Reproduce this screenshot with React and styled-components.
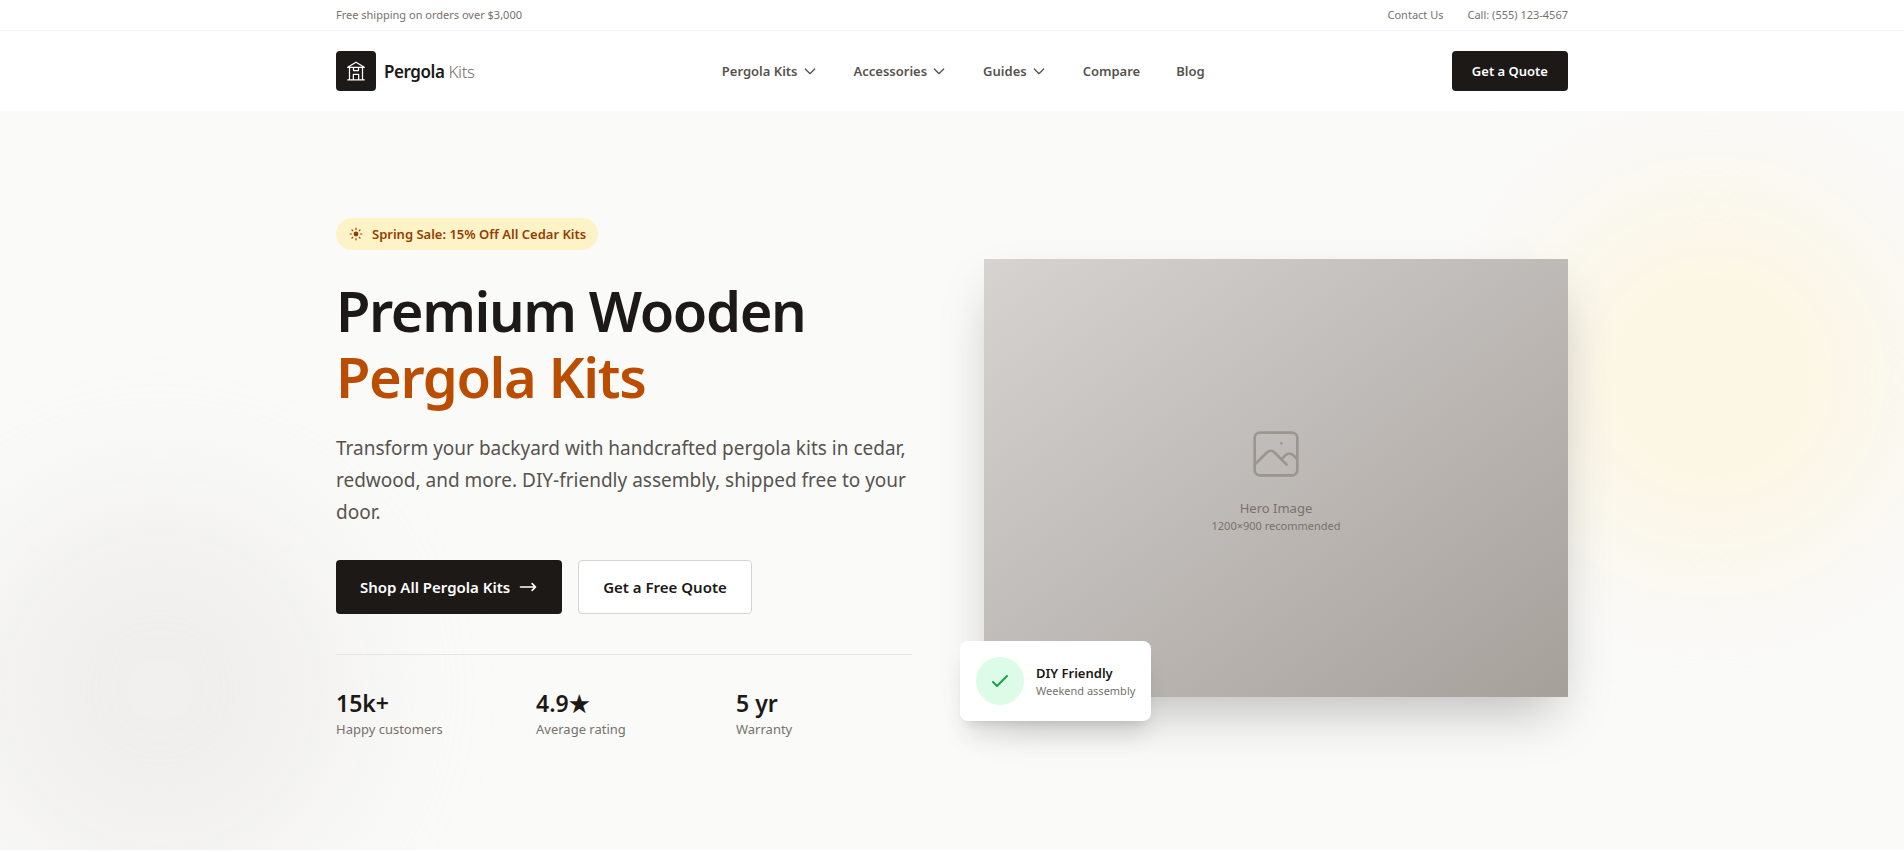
import React from 'react';
import styled, { createGlobalStyle } from 'styled-components';

const navItems = [
  { label: 'Pergola Kits', menu: true },
  { label: 'Accessories', menu: true },
  { label: 'Guides', menu: true },
  { label: 'Compare' },
  { label: 'Blog' },
];

const stats = [
  { value: '15k+', label: 'Happy customers' },
  { value: '4.9★', label: 'Average rating' },
  { value: '5 yr', label: 'Warranty' },
];

const LogoIcon = () => (
  <svg width="20" height="20" viewBox="0 0 24 24" fill="none" stroke="currentColor" strokeWidth="1.5" strokeLinecap="round" strokeLinejoin="round">
    <path d="M2 7.5 12 1.5l10 6M2 7.5h20M4.2 7.5v15M19.8 7.5v15M9 7.5v4M15 7.5v4M9 11.5h6M8.8 22.5V16h6.4v6.5M2 22.5h20" />
  </svg>
);

const ChevronIcon = () => (
  <svg width="16" height="16" viewBox="0 0 24 24" fill="none" stroke="currentColor" strokeWidth="2" strokeLinecap="round" strokeLinejoin="round">
    <path d="M19 9l-7 7-7-7" />
  </svg>
);

const SunIcon = () => (
  <svg width="16" height="16" viewBox="0 0 20 20" fill="none" stroke="currentColor" strokeWidth="1.5" strokeLinecap="round">
    <circle cx="10" cy="10" r="3" fill="currentColor" stroke="none" />
    <path d="M10 2.75v1.5M10 15.75v1.5M2.75 10h1.5M15.75 10h1.5M4.9 4.9l1 1M14.1 14.1l1 1M4.9 15.1l1-1M14.1 5.9l1-1" />
  </svg>
);

const ArrowIcon = () => (
  <svg width="20" height="20" viewBox="0 0 24 24" fill="none" stroke="currentColor" strokeWidth="2" strokeLinecap="round" strokeLinejoin="round">
    <path d="M17 8l4 4m0 0l-4 4m4-4H3" />
  </svg>
);

const ImageIcon = () => (
  <svg width="64" height="64" viewBox="0 0 24 24" fill="none" stroke="currentColor" strokeWidth="1" strokeLinecap="round" strokeLinejoin="round">
    <path d="M4 16l4.586-4.586a2 2 0 012.828 0L16 16m-2-2l1.586-1.586a2 2 0 012.828 0L20 14m-6-6h.01M6 20h12a2 2 0 002-2V6a2 2 0 00-2-2H6a2 2 0 00-2 2v12a2 2 0 002 2z" />
  </svg>
);

const CheckIcon = () => (
  <svg width="24" height="24" viewBox="0 0 24 24" fill="none" stroke="currentColor" strokeWidth="2" strokeLinecap="round" strokeLinejoin="round">
    <path d="M5 13l4 4L19 7" />
  </svg>
);

const App = () => {
  return (
    <>
      <GlobalStyle />
      <TopBar>
        <TopBarInner>
          <span>Free shipping on orders over $3,000</span>
          <TopLinks>
            <a href="#contact">Contact Us</a>
            <a href="tel:5551234567">Call: (555) 123-4567</a>
          </TopLinks>
        </TopBarInner>
      </TopBar>
      <Header>
        <HeaderInner>
          <Brand href="#home">
            <LogoBox><LogoIcon /></LogoBox>
            <BrandName>Pergola <span>Kits</span></BrandName>
          </Brand>
          <Nav>
            {navItems.map((item) =>
              item.menu ? (
                <NavButton key={item.label} type="button">
                  {item.label}
                  <ChevronIcon />
                </NavButton>
              ) : (
                <NavLink key={item.label} href={`#${item.label.toLowerCase()}`}>{item.label}</NavLink>
              )
            )}
          </Nav>
          <QuoteButton type="button">Get a Quote</QuoteButton>
        </HeaderInner>
      </Header>
      <Hero>
        <AmberGlow />
        <StoneGlow />
        <HeroInner>
          <HeroText>
            <SaleBadge><SunIcon />Spring Sale: 15% Off All Cedar Kits</SaleBadge>
            <Title>Premium Wooden <span>Pergola Kits</span></Title>
            <Lead>
              Transform your backyard with handcrafted pergola kits in cedar, redwood, and more. DIY-friendly assembly, shipped free to your door.
            </Lead>
            <Actions>
              <ActionLink href="#shop" $dark>Shop All Pergola Kits<ArrowIcon /></ActionLink>
              <ActionLink href="#quote">Get a Free Quote</ActionLink>
            </Actions>
            <Stats>
              {stats.map((stat) => (
                <div key={stat.label}>
                  <StatValue>{stat.value}</StatValue>
                  <StatLabel>{stat.label}</StatLabel>
                </div>
              ))}
            </Stats>
          </HeroText>
          <HeroMedia>
            <Placeholder>
              <ImageIcon />
              <PlaceholderTitle>Hero Image</PlaceholderTitle>
              <PlaceholderHint>1200×900 recommended</PlaceholderHint>
            </Placeholder>
            <FloatCard>
              <CheckCircle><CheckIcon /></CheckCircle>
              <div>
                <FloatTitle>DIY Friendly</FloatTitle>
                <FloatText>Weekend assembly</FloatText>
              </div>
            </FloatCard>
          </HeroMedia>
        </HeroInner>
      </Hero>
    </>
  );
};

const GlobalStyle = createGlobalStyle`
  * {
    box-sizing: border-box;
  }
  body {
    margin: 0;
    background: #ffffff;
    color: #1c1917;
    font-family: 'Segoe UI', 'Noto Sans', 'Open Sans', sans-serif;
    font-size: 13px;
  }
  a {
    color: inherit;
    text-decoration: none;
  }
  button {
    font: inherit;
    border: none;
    cursor: pointer;
  }
  svg {
    display: block;
    flex-shrink: 0;
  }
`;

const Container = styled.div`
  max-width: 1280px;
  margin: 0 auto;
  padding: 0 24px;
`;

const TopBar = styled.div`
  border-bottom: 1px solid #f5f5f4;
  color: #78716c;
  font-size: 11px;
  line-height: 14px;
`;

const TopBarInner = styled(Container)`
  display: flex;
  justify-content: space-between;
  padding: 8px 24px;
`;

const TopLinks = styled.div`
  display: flex;
  gap: 24px;
`;

const Header = styled.header`
  background: #ffffff;
`;

const HeaderInner = styled(Container)`
  display: flex;
  align-items: center;
  justify-content: space-between;
  height: 80px;
`;

const Brand = styled.a`
  display: flex;
  align-items: center;
  gap: 8px;
`;

const LogoBox = styled.div`
  display: flex;
  align-items: center;
  justify-content: center;
  width: 40px;
  height: 40px;
  border-radius: 4px;
  background: #1c1917;
  color: #ffffff;
`;

const BrandName = styled.span`
  font-size: 17px;
  font-weight: 600;
  letter-spacing: -0.025em;

  span {
    font-weight: 300;
    color: #78716c;
  }
`;

const Nav = styled.nav`
  display: flex;
  align-items: center;
  gap: 36px;
  color: #57534e;
  font-weight: 600;
`;

const NavButton = styled.button`
  display: flex;
  align-items: center;
  gap: 4px;
  padding: 0;
  background: none;
  color: inherit;
`;

const NavLink = styled.a`
  color: inherit;
`;

const QuoteButton = styled.button`
  height: 40px;
  padding: 0 20px;
  border-radius: 4px;
  background: #1c1917;
  color: #ffffff;
  font-weight: 600;
`;

const Hero = styled.section`
  position: relative;
  overflow: hidden;
  background: #fafaf9;
`;

const Glow = styled.div`
  position: absolute;
  width: 384px;
  height: 384px;
  border-radius: 50%;
  filter: blur(64px);
`;

const AmberGlow = styled(Glow)`
  top: 74px;
  right: 0;
  background: rgba(254, 243, 214, 0.6);
`;

const StoneGlow = styled(Glow)`
  bottom: -32px;
  left: -32px;
  background: rgba(231, 229, 228, 0.5);
`;

const HeroInner = styled(Container)`
  position: relative;
  display: grid;
  grid-template-columns: 1fr 1fr;
  align-items: center;
  gap: 64px;
  padding: 107px 24px 112px;
`;

const HeroText = styled.div`
  max-width: 576px;
`;

const SaleBadge = styled.div`
  display: inline-flex;
  align-items: center;
  gap: 8px;
  height: 32px;
  padding: 0 12px;
  border-radius: 16px;
  background: #fef3c6;
  color: #973c00;
  font-weight: 600;
  vertical-align: top;
`;

const Title = styled.h1`
  margin: 27px 0 23px;
  font-size: 56px;
  font-weight: 600;
  line-height: 66px;
  letter-spacing: -0.025em;

  span {
    display: block;
    color: #bb4d00;
  }
`;

const Lead = styled.p`
  margin: 0 0 32px;
  color: #57534e;
  font-size: 19px;
  line-height: 32px;
`;

const Actions = styled.div`
  display: flex;
  gap: 16px;
`;

const ActionLink = styled.a`
  display: flex;
  align-items: center;
  gap: 8px;
  height: 54px;
  padding: 0 24px;
  border: ${({ $dark }) => ($dark ? 'none' : '1px solid #d6d3d1')};
  border-radius: 4px;
  background: ${({ $dark }) => ($dark ? '#1c1917' : '#ffffff')};
  color: ${({ $dark }) => ($dark ? '#ffffff' : '#1c1917')};
  font-size: 15px;
  font-weight: 600;
`;

const Stats = styled.div`
  display: grid;
  grid-template-columns: repeat(3, 1fr);
  gap: 24px;
  margin-top: 40px;
  padding-top: 32px;
  border-top: 1px solid #e7e5e4;
`;

const StatValue = styled.div`
  font-size: 23px;
  font-weight: 600;
  line-height: 33px;
`;

const StatLabel = styled.div`
  color: #78716c;
  line-height: 18px;
`;

const HeroMedia = styled.div`
  position: relative;
`;

const Placeholder = styled.div`
  display: flex;
  flex-direction: column;
  align-items: center;
  justify-content: center;
  aspect-ratio: 4 / 3;
  background: linear-gradient(to bottom right, #d6d3d1, #a6a09b);
  box-shadow: 0 25px 50px -12px rgba(0, 0, 0, 0.25);
  color: #79716b;

  svg {
    margin-bottom: 12px;
    opacity: 0.5;
  }
`;

const PlaceholderTitle = styled.div`
  line-height: 20px;
`;

const PlaceholderHint = styled.div`
  font-size: 11px;
  line-height: 16px;
`;

const FloatCard = styled.div`
  position: absolute;
  left: -24px;
  bottom: -24px;
  display: flex;
  align-items: center;
  gap: 12px;
  padding: 16px;
  border-radius: 8px;
  background: #ffffff;
  box-shadow: 0 20px 25px -5px rgba(0, 0, 0, 0.1), 0 8px 10px -6px rgba(0, 0, 0, 0.1);
`;

const CheckCircle = styled.div`
  display: flex;
  align-items: center;
  justify-content: center;
  width: 48px;
  height: 48px;
  border-radius: 50%;
  background: #dcfce7;
  color: #16a34a;
`;

const FloatTitle = styled.div`
  font-weight: 600;
  line-height: 20px;
`;

const FloatText = styled.div`
  color: #78716c;
  font-size: 11px;
  line-height: 16px;
`;

export default App;
